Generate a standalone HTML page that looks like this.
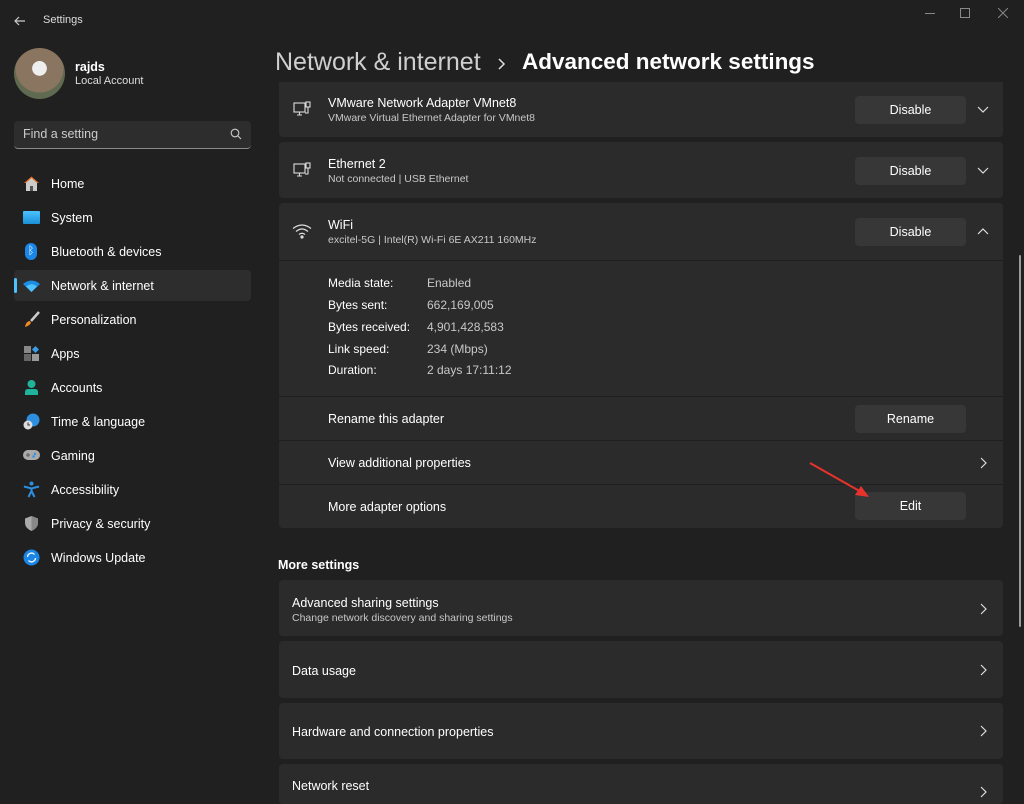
<!DOCTYPE html>
<html><head><meta charset="utf-8"><style>
*{margin:0;padding:0;box-sizing:border-box}
body{width:1024px;height:795px;background:#202020;font-family:"Segoe UI","Liberation Sans",sans-serif;color:#fff;overflow:hidden;position:relative;font-size:13px}
.a{position:absolute}
.card{position:absolute;left:279px;width:724px;background:#2b2b2b;border-radius:4px}
.t{position:absolute;font-size:12.5px;color:#fff;white-space:nowrap}
.s{position:absolute;font-size:10.5px;color:#c8c8c8;white-space:nowrap}
.btn{position:absolute;left:855px;width:111px;height:28px;background:#373737;border-radius:4px;font-size:12.5px;text-align:center;line-height:28px}
.nav{position:absolute;left:51px;font-size:12.5px;white-space:nowrap}
.ico{position:absolute;left:23px;width:17px;height:17px}
.chev{position:absolute;left:976px;width:14px;height:14px}
.k{position:absolute;left:328px;font-size:12px}
.v{position:absolute;left:427px;font-size:12px;color:#c8c8c8}
.div{position:absolute;left:279px;width:724px;height:1px;background:#1f1f1f}
</style></head><body>
<svg class="a" style="left:13px;top:14px" width="14" height="14" viewBox="0 0 14 14"><path d="M12 7H2M6 3L2 7l4 4" stroke="#ccc" stroke-width="1.2" fill="none"/></svg>
<div class="a" style="left:43px;top:14px;font-size:11px;color:#ddd">Settings</div>
<div class="a" style="left:925px;top:13px;width:10px;height:1px;background:#888"></div>
<div class="a" style="left:960px;top:8px;width:10px;height:10px;border:1px solid #888"></div>
<svg class="a" style="left:998px;top:8px" width="10" height="10"><path d="M0 0L10 10M10 0L0 10" stroke="#888"/></svg>
<div class="a" style="left:14px;top:48px;width:51px;height:51px;border-radius:50%;background:radial-gradient(circle at 50% 40%,#eee 0 18%,#8a7560 19% 60%,#5f6a50 61%)"></div>
<div class="a" style="left:75px;top:60px;font-size:12.5px;font-weight:bold">rajds</div>
<div class="a" style="left:75px;top:75px;font-size:11px;color:#ddd">Local Account</div>
<div class="a" style="left:14px;top:121px;width:237px;height:28px;background:#2d2d2d;border-radius:4px;border-bottom:1px solid #8a8a8a"></div>
<div class="a" style="left:23px;top:127px;font-size:12.5px;color:#ccc">Find a setting</div>
<svg class="a" style="left:230px;top:128px" width="12" height="12"><circle cx="5" cy="5" r="3.8" stroke="#ccc" fill="none" stroke-width="1.1"/><path d="M8 8l3 3" stroke="#ccc" stroke-width="1.1"/></svg>
<div class="a" style="left:14px;top:270px;width:237px;height:31px;background:#2d2d2d;border-radius:4px"></div>
<div class="a" style="left:14px;top:278px;width:3px;height:15px;background:#4cc2ff;border-radius:2px"></div>
<svg class="ico" style="top:175px" viewBox="0 0 17 17"><path d="M1 8L8.5 1.5 16 8" fill="#e56b1f"/><path d="M3 8v8h11V8L8.5 3z" fill="#ccc"/><rect x="7" y="11" width="3" height="5" fill="#555"/></svg>
<div class="nav" style="top:177px">Home</div>
<div class="ico" style="top:211px;height:13px;background:linear-gradient(#4cc2ff,#1a8fd6);border-radius:1px"></div>
<div class="nav" style="top:211px">System</div>
<div class="ico" style="top:243px;left:25px;width:12px;height:17px;background:#1a86e8;border-radius:6px;font-size:11px;text-align:center;line-height:17px;color:#fff">ᛒ</div>
<div class="nav" style="top:245px">Bluetooth &amp; devices</div>
<svg class="ico" style="top:278px" viewBox="0 0 17 17"><path d="M0 6Q8.5-1 17 6L8.5 14z" fill="#1c8de0"/><path d="M3 8.5Q8.5 4 14 8.5L8.5 14z" fill="#4cc2ff"/></svg>
<div class="nav" style="top:279px">Network &amp; internet</div>
<svg class="ico" style="top:311px" viewBox="0 0 17 17"><path d="M16 1L8 10" stroke="#ccc" stroke-width="2.5"/><path d="M2 16Q3 10 7 10l1 2Q6 15 2 16z" fill="#f08a24"/></svg>
<div class="nav" style="top:313px">Personalization</div>
<svg class="ico" style="top:345px" viewBox="0 0 17 17"><rect x="1" y="1" width="7" height="7" fill="#888"/><rect x="1" y="9" width="7" height="7" fill="#666"/><rect x="9" y="9" width="7" height="7" fill="#999"/><path d="M12.5 1l3.5 3.5-3.5 3.5L9 4.5z" fill="#3a9be8"/></svg>
<div class="nav" style="top:347px">Apps</div>
<svg class="ico" style="top:379px" viewBox="0 0 17 17"><circle cx="8.5" cy="5" r="4" fill="#1fb39b"/><path d="M2 16v-3q0-3 3-3h7q3 0 3 3v3z" fill="#1fb39b"/></svg>
<div class="nav" style="top:381px">Accounts</div>
<svg class="ico" style="top:413px" viewBox="0 0 17 17"><circle cx="10" cy="7" r="6.5" fill="#2c8fe0"/><circle cx="5" cy="12" r="4.5" fill="#ddd"/><path d="M5 9.5V12h2" stroke="#333" fill="none"/></svg>
<div class="nav" style="top:415px">Time &amp; language</div>
<svg class="ico" style="top:447px" viewBox="0 0 17 17"><rect x="0" y="3" width="17" height="10" rx="5" fill="#aaa"/><circle cx="12" cy="7" r="1.2" fill="#2c8fe0"/><circle cx="10.5" cy="9.5" r="1.2" fill="#2c8fe0"/><path d="M3 8h4M5 6v4" stroke="#666" stroke-width="1.3"/></svg>
<div class="nav" style="top:449px">Gaming</div>
<svg class="ico" style="top:481px" viewBox="0 0 17 17"><circle cx="8.5" cy="2.5" r="2" fill="#2c8fe0"/><path d="M1 5.5l7.5 2 7.5-2M8.5 7v3l-3 6M8.5 10l3 6" stroke="#2c8fe0" stroke-width="2" fill="none"/></svg>
<div class="nav" style="top:483px">Accessibility</div>
<svg class="ico" style="top:515px" viewBox="0 0 17 17"><path d="M8.5 1L15 3.5V8q0 5-6.5 8Q2 13 2 8V3.5z" fill="#aaa"/><path d="M8.5 1L15 3.5V8q0 5-6.5 8z" fill="#888"/></svg>
<div class="nav" style="top:517px">Privacy &amp; security</div>
<svg class="ico" style="top:549px" viewBox="0 0 17 17"><circle cx="8.5" cy="8.5" r="8" fill="#1a86e8"/><path d="M4.5 8a4 4 0 0 1 7-2.5M12.5 9a4 4 0 0 1-7 2.5" stroke="#fff" stroke-width="1.3" fill="none"/></svg>
<div class="nav" style="top:551px">Windows Update</div>
<div class="a" style="left:275px;top:48px;font-size:25px;color:#cfcfcf;white-space:nowrap">Network &amp; internet</div>
<svg class="a" style="left:497px;top:57px" width="10" height="14"><path d="M2 2l5 5-5 5" stroke="#ddd" stroke-width="1.5" fill="none"/></svg>
<div class="a" style="left:522px;top:49px;font-size:22.5px;font-weight:600;white-space:nowrap">Advanced network settings</div>
<div class="card" style="top:82px;height:55px;border-radius:0 0 4px 4px"></div>
<svg class="a" style="left:293px;top:101px" width="18" height="18" viewBox="0 0 18 18" fill="none" stroke="#ddd" stroke-width="1.1"><rect x="1" y="2" width="11" height="9"/><path d="M4 14h5M6.5 11v3"/><rect x="13" y="1" width="4" height="5"/><path d="M15 6v6h-3"/></svg>
<div class="t" style="left:328px;top:96px">VMware Network Adapter VMnet8</div>
<div class="s" style="left:328px;top:112px">VMware Virtual Ethernet Adapter for VMnet8</div>
<div class="btn" style="top:96px">Disable</div>
<svg class="chev" style="top:103px"><path d="M2 4l5 5 5-5" stroke="#ddd" stroke-width="1.2" fill="none"/></svg>
<div class="card" style="top:142px;height:56px"></div>
<svg class="a" style="left:293px;top:162px" width="18" height="18" viewBox="0 0 18 18" fill="none" stroke="#ddd" stroke-width="1.1"><rect x="1" y="2" width="11" height="9"/><path d="M4 14h5M6.5 11v3"/><rect x="13" y="1" width="4" height="5"/><path d="M15 6v6h-3"/></svg>
<div class="t" style="left:328px;top:157px">Ethernet 2</div>
<div class="s" style="left:328px;top:173px">Not connected | USB Ethernet</div>
<div class="btn" style="top:157px">Disable</div>
<svg class="chev" style="top:164px"><path d="M2 4l5 5 5-5" stroke="#ddd" stroke-width="1.2" fill="none"/></svg>
<div class="card" style="top:203px;height:325px"></div>
<div class="div" style="top:260px"></div>
<svg class="a" style="left:292px;top:223px" width="20" height="16" viewBox="0 0 20 16" fill="none" stroke="#ddd" stroke-width="1.2"><path d="M1 5.5q9-7 18 0M4 8.5q6-5 12 0M7 11.5q3-2.5 6 0"/><circle cx="10" cy="14" r="1" fill="#ddd"/></svg>
<div class="t" style="left:328px;top:218px">WiFi</div>
<div class="s" style="left:328px;top:234px">excitel-5G | Intel(R) Wi-Fi 6E AX211 160MHz</div>
<div class="btn" style="top:218px">Disable</div>
<svg class="chev" style="top:224px"><path d="M2 10l5-5 5 5" stroke="#ddd" stroke-width="1.2" fill="none"/></svg>
<div class="k" style="top:276px">Media state:</div><div class="v" style="top:276px">Enabled</div>
<div class="k" style="top:298px">Bytes sent:</div><div class="v" style="top:298px">662,169,005</div>
<div class="k" style="top:320px">Bytes received:</div><div class="v" style="top:320px">4,901,428,583</div>
<div class="k" style="top:342px">Link speed:</div><div class="v" style="top:342px">234 (Mbps)</div>
<div class="k" style="top:363px">Duration:</div><div class="v" style="top:363px">2 days 17:11:12</div>
<div class="div" style="top:396px"></div>
<div class="t" style="left:328px;top:412px">Rename this adapter</div>
<div class="btn" style="top:405px">Rename</div>
<div class="div" style="top:440px"></div>
<div class="t" style="left:328px;top:456px">View additional properties</div>
<svg class="chev" style="top:456px"><path d="M5 2l5 5-5 5" stroke="#ddd" stroke-width="1.2" fill="none"/></svg>
<div class="div" style="top:484px"></div>
<div class="t" style="left:328px;top:500px">More adapter options</div>
<div class="btn" style="top:492px">Edit</div>
<svg class="a" style="left:805px;top:460px" width="70" height="40"><path d="M5 3L58 33" stroke="#e8322c" stroke-width="2"/><path d="M64 37L50 35 56 26z" fill="#e8322c"/></svg>
<div class="a" style="left:278px;top:558px;font-size:12.5px;font-weight:600">More settings</div>
<div class="card" style="top:580px;height:56px"></div>
<div class="t" style="left:292px;top:596px">Advanced sharing settings</div>
<div class="s" style="left:292px;top:612px">Change network discovery and sharing settings</div>
<svg class="chev" style="top:602px"><path d="M5 2l5 5-5 5" stroke="#ddd" stroke-width="1.2" fill="none"/></svg>
<div class="card" style="top:641px;height:57px"></div>
<div class="t" style="left:292px;top:664px">Data usage</div>
<svg class="chev" style="top:663px"><path d="M5 2l5 5-5 5" stroke="#ddd" stroke-width="1.2" fill="none"/></svg>
<div class="card" style="top:703px;height:56px"></div>
<div class="t" style="left:292px;top:725px">Hardware and connection properties</div>
<svg class="chev" style="top:724px"><path d="M5 2l5 5-5 5" stroke="#ddd" stroke-width="1.2" fill="none"/></svg>
<div class="card" style="top:764px;height:40px"></div>
<div class="t" style="left:292px;top:779px">Network reset</div>
<svg class="chev" style="top:785px"><path d="M5 2l5 5-5 5" stroke="#ddd" stroke-width="1.2" fill="none"/></svg>
<div class="a" style="left:1019px;top:255px;width:2px;height:372px;background:#9a9a9a;border-radius:1px"></div>
</body></html>
